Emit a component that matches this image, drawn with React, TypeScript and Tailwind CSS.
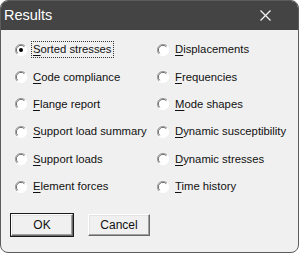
import React from "react";

type Opt = { label: string; key: string; rest: string };

const left: Opt[] = [
  { key: "S", rest: "orted stresses", label: "Sorted stresses" },
  { key: "C", rest: "ode compliance", label: "Code compliance" },
  { key: "F", rest: "lange report", label: "Flange report" },
  { key: "S", rest: "upport load summary", label: "Support load summary" },
  { key: "S", rest: "upport loads", label: "Support loads" },
  { key: "E", rest: "lement forces", label: "Element forces" },
];

const right: Opt[] = [
  { key: "D", rest: "isplacements", label: "Displacements" },
  { key: "F", rest: "requencies", label: "Frequencies" },
  { key: "M", rest: "ode shapes", label: "Mode shapes" },
  { key: "D", rest: "ynamic susceptibility", label: "Dynamic susceptibility" },
  { key: "D", rest: "ynamic stresses", label: "Dynamic stresses" },
  { key: "T", rest: "ime history", label: "Time history" },
];

function Radio({ on }: { on?: boolean }) {
  return (
    <svg width="12" height="12" viewBox="0 0 12 12" className="shrink-0">
      <circle cx="6" cy="6" r="5.5" fill="#ffffff" />
      <path d="M10 2 A5.5 5.5 0 0 0 2 10" fill="none" stroke="#a0a0a0" strokeWidth="1" />
      <path d="M9.3 2.7 A4.6 4.6 0 0 0 2.7 9.3" fill="none" stroke="#696969" strokeWidth="1" />
      <path d="M2 10 A5.5 5.5 0 0 0 10 2" fill="none" stroke="#ffffff" strokeWidth="1" />
      {on ? <circle cx="6" cy="6" r="2" fill="#000000" /> : null}
    </svg>
  );
}

function Row({ o, on, focus }: { o: Opt; on?: boolean; focus?: boolean }) {
  return (
    <div className="flex h-[27.4px] items-center gap-[5px]">
      <Radio on={on} />
      <span
        className={
          focus
            ? "px-[1px] leading-[15px] outline outline-1 outline-dotted outline-[#333] outline-offset-0"
            : "px-[1px] leading-[15px]"
        }
      >
        <span className="underline underline-offset-[2px]">{o.key}</span>
        {o.rest}
      </span>
    </div>
  );
}

function Btn({ children, def }: { children: React.ReactNode; def?: boolean }) {
  return (
    <div className={def ? "border border-[#1a1a1a]" : "border border-transparent"}>
      <div className="flex h-[22px] w-[62px] items-center justify-center border-t border-l border-white border-r border-b border-r-[#696969] border-b-[#696969] bg-[#f0f0f0] shadow-[inset_-1px_-1px_0_#a0a0a0,inset_1px_1px_0_#e3e3e3] text-[12px] text-[#111]">
        {children}
      </div>
    </div>
  );
}

export default function App() {
  return (
    <div className="h-[254px] w-[300px] bg-white font-['Liberation_Sans',Arial,sans-serif]">
      <div className="flex h-[253px] w-[299px] flex-col overflow-hidden rounded-[8px] border border-[#5c5c5c] bg-[#f0f0f0]">
        <div className="flex h-[29px] shrink-0 items-center justify-between bg-[#444444] pl-[3px] pr-[27px] text-white">
          <span className="text-[14.5px]">Results</span>
          <svg width="11" height="11" viewBox="0 0 11 11">
            <path d="M0.5 0.5 L10.5 10.5 M10.5 0.5 L0.5 10.5" stroke="#f2f2f2" strokeWidth="1.3" />
          </svg>
        </div>
        <div className="flex pt-[6px] text-[11.3px] text-[#111]">
          <div className="ml-[14px] flex w-[142px] flex-col">
            {left.map((o, i) => (
              <Row key={o.label} o={o} on={i === 0} focus={i === 0} />
            ))}
          </div>
          <div className="flex flex-col">
            {right.map((o) => (
              <Row key={o.label} o={o} />
            ))}
          </div>
        </div>
        <div className="mt-[13px] ml-[9px] flex gap-[13px]">
          <Btn def>OK</Btn>
          <Btn>Cancel</Btn>
        </div>
      </div>
    </div>
  );
}
